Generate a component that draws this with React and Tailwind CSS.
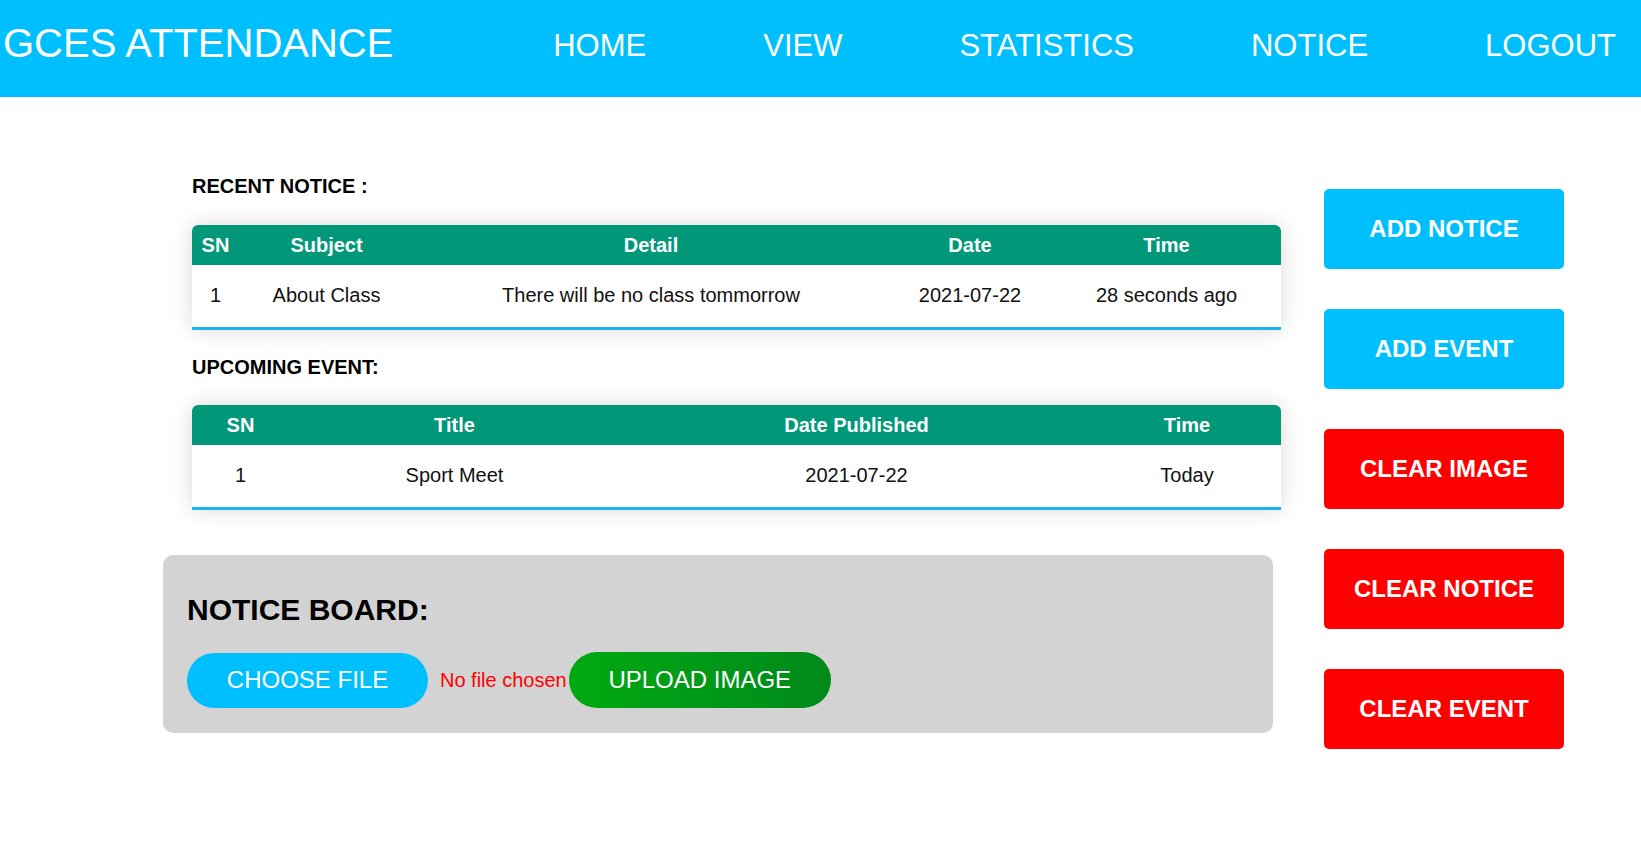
import React from "react";

const navItems = ["HOME", "VIEW", "STATISTICS", "NOTICE", "LOGOUT"];

const notices = [
  { sn: 1, subject: "About Class", detail: "There will be no class tommorrow", date: "2021-07-22", time: "28 seconds ago" },
];

const events = [{ sn: 1, title: "Sport Meet", date: "2021-07-22", time: "Today" }];

const sideButtons = [
  { label: "ADD NOTICE", color: "bg-[#00bfff]" },
  { label: "ADD EVENT", color: "bg-[#00bfff]" },
  { label: "CLEAR IMAGE", color: "bg-[#ff0000]" },
  { label: "CLEAR NOTICE", color: "bg-[#ff0000]" },
  { label: "CLEAR EVENT", color: "bg-[#ff0000]" },
];

function Header() {
  return (
    <header className="flex h-[97px] items-start justify-between bg-[#00bfff] text-white">
      <h1 className="ml-[3px] mt-[20px] text-[40px] leading-[46px] font-normal">GCES ATTENDANCE</h1>
      <ul className="mr-[25px] mt-[28px] flex gap-[117px]">
        {navItems.map((item) => (
          <li key={item} className="text-[31px] leading-[35px]">
            {item}
          </li>
        ))}
      </ul>
    </header>
  );
}

function DataTable({ cols, heads, rows }) {
  return (
    <div className="w-[1089px] shadow-[0_0_20px_rgba(0,0,0,0.15)]">
      <div className={`grid ${cols} h-[40px] items-center rounded-t-[6px] bg-[#009879] text-[20px] font-bold text-white`}>
        {heads.map((h) => (
          <div key={h} className="text-center">
            {h}
          </div>
        ))}
      </div>
      {rows.map((row, i) => (
        <div
          key={i}
          className={`grid ${cols} h-[65px] items-center border-b-[3px] border-[#1cb4ee] bg-white pb-[2px] text-[20px] text-[#111]`}
        >
          {row.map((cell, j) => (
            <div key={j} className="text-center">
              {cell}
            </div>
          ))}
        </div>
      ))}
    </div>
  );
}

export default function App() {
  return (
    <div className="min-h-[843px] bg-white font-['Liberation_Sans',Arial,sans-serif]">
      <Header />

      <main className="flex">
        <div className="ml-[163px] w-[1118px]">
          <div className="pl-[29px]">
            <h3 className="mt-[78px] text-[20px] leading-[23px] font-bold text-black">RECENT NOTICE :</h3>
            <div className="mt-[27px]">
              <DataTable
                cols="grid-cols-[47px_175px_474px_164px_1fr]"
                heads={["SN", "Subject", "Detail", "Date", "Time"]}
                rows={notices.map((n) => [n.sn, n.subject, n.detail, n.date, n.time])}
              />
            </div>

            <h3 className="mt-[26px] text-[20px] leading-[23px] font-bold text-black">UPCOMING EVENT:</h3>
            <div className="mt-[26px]">
              <DataTable
                cols="grid-cols-[97px_331px_473px_1fr]"
                heads={["SN", "Title", "Date Published", "Time"]}
                rows={events.map((e) => [e.sn, e.title, e.date, e.time])}
              />
            </div>
          </div>

          <section className="mt-[45px] h-[178px] w-[1110px] rounded-[10px] bg-[#d3d3d3] pl-[24px] pt-[38px]">
            <h2 className="text-[30px] leading-[34px] font-bold text-black">NOTICE BOARD:</h2>
            <div className="mt-[25px] flex items-center">
              <button className="h-[55px] w-[241px] rounded-full bg-[#00bfff] text-[24px] text-white">
                CHOOSE FILE
              </button>
              <span className="ml-[12px] text-[20px] text-[#ff0000]">No file chosen</span>
              <button className="ml-[2px] h-[56px] w-[262px] rounded-full bg-gradient-to-r from-[#00aa10] to-[#00891a] text-[24px] text-white">
                UPLOAD IMAGE
              </button>
            </div>
          </section>
        </div>

        <aside className="ml-[43px] mt-[92px] flex w-[240px] flex-col gap-[40px]">
          {sideButtons.map((b) => (
            <button
              key={b.label}
              className={`h-[80px] w-[240px] rounded-[5px] ${b.color} text-[24px] font-bold text-white`}
            >
              {b.label}
            </button>
          ))}
        </aside>
      </main>
    </div>
  );
}
